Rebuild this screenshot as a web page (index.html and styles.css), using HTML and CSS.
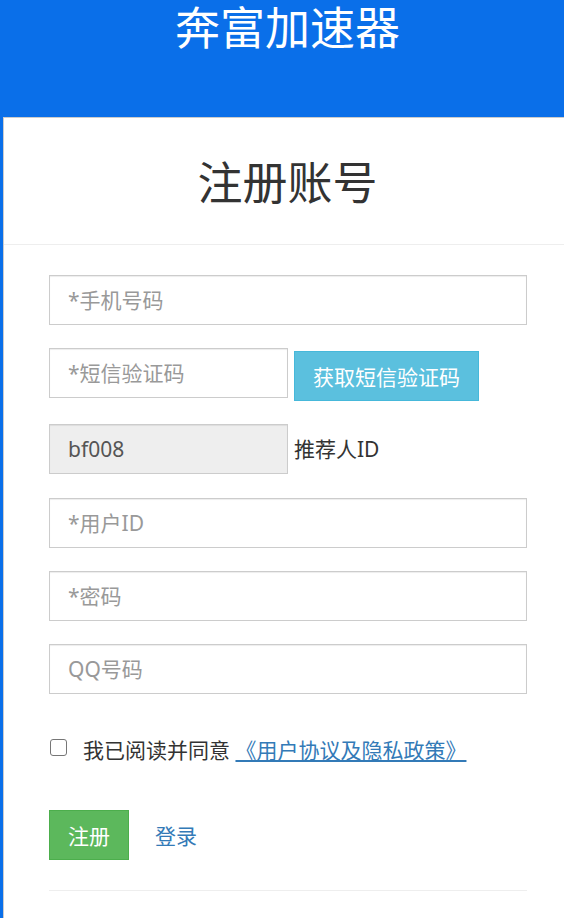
FILE: index.html
```html
<!DOCTYPE html>
<html lang="zh-CN">
<head>
    <meta charset="UTF-8">
    <meta name="viewport" content="width=device-width, initial-scale=1.0">
    <title>奔富加速器 - 注册账号</title>
    <link rel="stylesheet" href="styles.css">
</head>
<body>

    <!-- Brand Bar -->
    <div class="top-bar">
        <h1 class="brand">奔富加速器</h1>
    </div>

    <!-- Register Panel -->
    <div class="panel">
        <h2 class="panel-title">注册账号</h2>

        <form class="reg-form" id="regForm">
            <div class="form-row">
                <input type="text" class="form-control" placeholder="*手机号码">
            </div>

            <div class="form-row">
                <input type="text" class="form-control half" placeholder="*短信验证码">
                <button type="button" class="btn btn-info">获取短信验证码</button>
            </div>

            <div class="form-row">
                <input type="text" class="form-control half" value="bf008" readonly>
                <span class="field-label">推荐人ID</span>
            </div>

            <div class="form-row">
                <input type="text" class="form-control" placeholder="*用户ID">
            </div>

            <div class="form-row">
                <input type="password" class="form-control" placeholder="*密码">
            </div>

            <div class="form-row">
                <input type="text" class="form-control" placeholder="QQ号码">
            </div>

            <div class="agree">
                <input type="checkbox" id="agree" class="agree-box">
                <label for="agree">我已阅读并同意 <a href="#" class="link">《用户协议及隐私政策》</a></label>
            </div>

            <div class="actions">
                <button type="submit" class="btn btn-success">注册</button>
                <a href="#" class="login-link">登录</a>
            </div>
        </form>
    </div>

</body>
</html>
```

FILE: styles.css
```css
/* Global Styling */
* {
    margin: 0;
    padding: 0;
    box-sizing: border-box;
    font-family: "Noto Sans", "Noto Sans CJK SC", sans-serif;
}

body {
    background: #0a6fe9;
    color: #333;
    font-size: 21px;
    overflow: hidden;
}

/* Brand Bar */
.top-bar {
    height: 117px;
    padding-left: 11px;
    text-align: center;
}

.brand {
    font-size: 45px;
    line-height: 56px;
    font-weight: normal;
    color: white;
}

/* Register Panel */
.panel {
    margin-left: 3px;
    min-height: 801px;
    background: white;
    border-top: 1px solid #ccc;
    border-left: 1px solid #ccc;
}

.panel-title {
    padding: 42px 0 39px 7px;
    font-size: 45px;
    line-height: 45px;
    font-weight: normal;
    text-align: center;
    color: #333;
    border-bottom: 1px solid #eee;
}

.reg-form {
    width: 478px;
    margin-left: 45px;
    padding-top: 30px;
}

.form-row {
    display: flex;
    align-items: flex-start;
    margin-bottom: 23.2px;
}

.form-control {
    width: 100%;
    height: 50px;
    padding: 0 18px;
    font-size: 21px;
    color: #555;
    background: white;
    border: 1px solid #ccc;
    border-radius: 0;
    box-shadow: inset 0 1px 1px rgba(0, 0, 0, 0.075);
    outline: none;
}

.form-control::placeholder {
    color: #999;
}

.form-control.half {
    width: 239px;
    flex: none;
}

.form-control[readonly] {
    background: #eee;
}

.field-label {
    margin-left: 6px;
    line-height: 50px;
    color: #333;
}

/* Buttons */
.btn {
    height: 50px;
    padding: 0 18px;
    font-size: 21px;
    color: white;
    border: 1px solid transparent;
    border-radius: 0;
    cursor: pointer;
}

.btn-info {
    margin: 3px 0 0 6px;
    background: #5bc0de;
    border-color: #46b8da;
}

.btn-success {
    background: #5cb85c;
    border-color: #4cae4c;
}

/* Agreement */
.agree {
    display: flex;
    align-items: flex-start;
    height: 30px;
    margin-top: 41px;
    line-height: 30px;
}

.agree-box {
    appearance: none;
    width: 17px;
    height: 17px;
    margin: 4px 16px 0 1px;
    border: 1.5px solid #767676;
    border-radius: 3px;
    background: white;
}

.agree-box:checked {
    background: #0a6fe9;
    border-color: #0a6fe9;
}

.link {
    color: #337ab7;
    text-decoration: underline;
}

/* Actions */
.actions {
    display: flex;
    align-items: center;
    margin-top: 45px;
    padding-bottom: 30px;
    border-bottom: 1px solid #eee;
}

.login-link {
    margin-left: 26px;
    color: #337ab7;
    text-decoration: none;
}
```
